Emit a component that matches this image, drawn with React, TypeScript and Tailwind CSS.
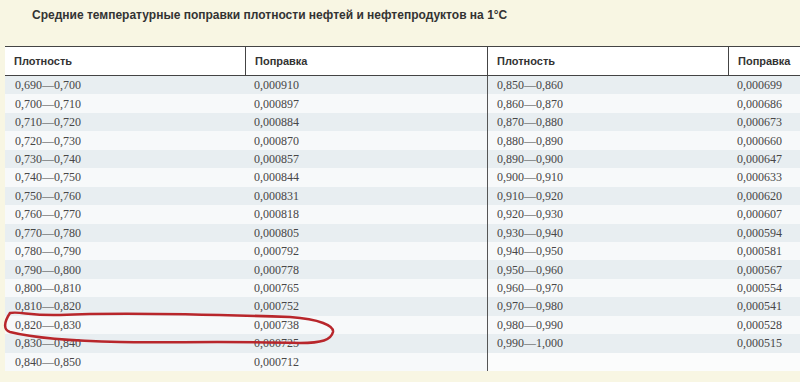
const left: [string, string][] = [
  ["0,690—0,700", "0,000910"],
  ["0,700—0,710", "0,000897"],
  ["0,710—0,720", "0,000884"],
  ["0,720—0,730", "0,000870"],
  ["0,730—0,740", "0,000857"],
  ["0,740—0,750", "0,000844"],
  ["0,750—0,760", "0,000831"],
  ["0,760—0,770", "0,000818"],
  ["0,770—0,780", "0,000805"],
  ["0,780—0,790", "0,000792"],
  ["0,790—0,800", "0,000778"],
  ["0,800—0,810", "0,000765"],
  ["0,810—0,820", "0,000752"],
  ["0,820—0,830", "0,000738"],
  ["0,830—0,840", "0,000725"],
  ["0,840—0,850", "0,000712"],
];

const right: [string, string][] = [
  ["0,850—0,860", "0,000699"],
  ["0,860—0,870", "0,000686"],
  ["0,870—0,880", "0,000673"],
  ["0,880—0,890", "0,000660"],
  ["0,890—0,900", "0,000647"],
  ["0,900—0,910", "0,000633"],
  ["0,910—0,920", "0,000620"],
  ["0,920—0,930", "0,000607"],
  ["0,930—0,940", "0,000594"],
  ["0,940—0,950", "0,000581"],
  ["0,950—0,960", "0,000567"],
  ["0,960—0,970", "0,000554"],
  ["0,970—0,980", "0,000541"],
  ["0,980—0,990", "0,000528"],
  ["0,990—1,000", "0,000515"],
  ["", ""],
];

export default function App() {
  return (
    <div className="relative h-[382px] w-[800px] overflow-hidden bg-[#f8f6e3] text-[#333]">
      <h1 className="pl-[32px] pt-[8px] font-['Liberation_Sans',Arial,sans-serif] text-[12px] font-bold leading-[14px] text-[#333]">
        Средние температурные поправки плотности нефтей и нефтепродуктов на 1°C
      </h1>

      <div className="ml-[5px] mt-[24px] w-[820px]">
        {/* header */}
        <div className="grid h-[30px] grid-cols-[240px_242px_241px_1fr] border-t border-b border-[#444] bg-white font-['Liberation_Sans',Arial,sans-serif] text-[11px] font-bold text-[#333]">
          <div className="flex items-center pl-[9px]">Плотность</div>
          <div className="flex items-center border-l border-[#444] pl-[9px]">Поправка</div>
          <div className="flex items-center border-l border-[#444] pl-[9px]">Плотность</div>
          <div className="flex items-center border-l border-[#444] pl-[9px]">Поправка</div>
        </div>

        {/* body */}
        <div className="font-['Liberation_Serif','Times_New_Roman',serif] text-[12px] text-[#474747]">
          {left.map((row, i) => {
            const r = right[i];
            const odd = i % 2 === 0;
            const bg = odd ? "bg-[#e8eef1]" : "bg-[#f7f9fa]";
            const bgR = r[0] === "" ? "bg-[#fbfcfc]" : bg;
            return (
              <div
                key={row[0]}
                className="grid h-[18.45px] grid-cols-[240px_242px_241px_1fr]"
              >
                <div className={`flex items-center pl-[10px] ${bg}`}>{row[0]}</div>
                <div className={`flex items-center pl-[9px] ${bg}`}>{row[1]}</div>
                <div className={`flex items-center border-l border-[#555] pl-[9px] ${bgR}`}>{r[0]}</div>
                <div className={`flex items-center pl-[9px] ${bgR}`}>{r[1]}</div>
              </div>
            );
          })}
        </div>
      </div>

      {/* red hand-drawn mark */}
      <svg className="pointer-events-none absolute left-0 top-0" width="800" height="382">
        <path
          d="M10 313 C 20 311, 30 316, 60 315 C 120 312, 200 314, 290 317 C 320 319, 334 326, 333 332 C 331 340, 322 343, 300 343 C 230 341, 160 343, 120 342 C 70 341, 30 337, 10 332 C 3 330, 4 322, 10 313"
          fill="none"
          stroke="#b8262b"
          strokeWidth="2.5"
          strokeLinecap="round"
        />
      </svg>
    </div>
  );
}
